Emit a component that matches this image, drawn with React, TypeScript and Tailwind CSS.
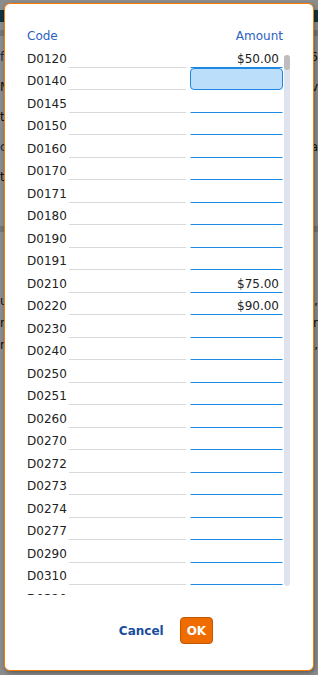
import React from 'react'

type Row = { code: string; amount: string }

const rows: Row[] = [
  { code: 'D0120', amount: '$50.00' },
  { code: 'D0140', amount: '' },
  { code: 'D0145', amount: '' },
  { code: 'D0150', amount: '' },
  { code: 'D0160', amount: '' },
  { code: 'D0170', amount: '' },
  { code: 'D0171', amount: '' },
  { code: 'D0180', amount: '' },
  { code: 'D0190', amount: '' },
  { code: 'D0191', amount: '' },
  { code: 'D0210', amount: '$75.00' },
  { code: 'D0220', amount: '$90.00' },
  { code: 'D0230', amount: '' },
  { code: 'D0240', amount: '' },
  { code: 'D0250', amount: '' },
  { code: 'D0251', amount: '' },
  { code: 'D0260', amount: '' },
  { code: 'D0270', amount: '' },
  { code: 'D0272', amount: '' },
  { code: 'D0273', amount: '' },
  { code: 'D0274', amount: '' },
  { code: 'D0277', amount: '' },
  { code: 'D0290', amount: '' },
  { code: 'D0310', amount: '' },
  { code: 'D0320', amount: '' },
]

const focusedCode = 'D0140'

function BackgroundPage() {
  // the page behind the dialog, dimmed by the overlay
  return (
    <div className="flex h-full flex-col bg-white text-[12px] text-[#222]">
      <div className="mt-[10px] h-[12px] bg-[#1f5f73]" />
      <div className="mt-[8px] h-[6px] bg-[#cfd8dc]" />
      <div className="flex flex-col gap-[12px] pt-[12px]">
        <div className="flex justify-between"><span className="text-[#1a4f8a]">fi</span><span>6</span></div>
        <div className="flex justify-between"><span>M</span><span>ev</span></div>
        <div className="flex justify-between"><span>t</span><span /></div>
        <div className="flex justify-between"><span className="text-[#1a4f8a]">c</span><span>a</span></div>
        <div className="flex justify-between"><span>t</span><span /></div>
      </div>
      <div className="mt-[40px] h-[6px] bg-[#cfd8dc]" />
      <div className="flex flex-col gap-[4px] pt-[60px]">
        <div className="flex justify-between"><span>u</span><span>s,</span></div>
        <div className="flex justify-between"><span>n</span><span>r</span></div>
        <div className="flex justify-between"><span>n</span><span>s,</span></div>
      </div>
    </div>
  )
}

function AmountRow({ row }: { row: Row }) {
  const focused = row.code === focusedCode
  return (
    <div className="flex h-[22.5px] shrink-0 items-end">
      <span className="w-[42px] shrink-0 leading-[18px] text-[#222]">{row.code}</span>
      <div className="flex-1 self-end border-b border-[#d9d9d9]" />
      <input
        readOnly
        value={row.amount}
        className={
          focused
            ? 'ml-[4px] h-[22px] w-[93px] shrink-0 rounded-[4px] border border-[#1e88e5] bg-[#bbdefb] pr-[3px] pt-[4px] text-right text-[#222] outline-none'
            : 'ml-[4px] h-[22px] w-[93px] shrink-0 rounded-none border border-transparent border-b-[#1e88e5] bg-transparent pr-[3px] pt-[4px] text-right text-[#222] outline-none'
        }
      />
    </div>
  )
}

export default function App() {
  return (
    <div
      className="relative h-[675px] w-[318px] overflow-hidden"
      style={{ fontFamily: '"DejaVu Sans", Verdana, sans-serif' }}
    >
      <div className="absolute inset-0">
        <BackgroundPage />
      </div>
      <div className="absolute inset-0 bg-black/45" />

      <div className="absolute left-[4px] top-[3px] flex h-[668px] w-[310px] flex-col rounded-[6px] border border-[#f57c00] bg-white pl-[22px] pr-[23px] pt-[23px] text-[12px] shadow-[1px_2px_4px_rgba(0,0,0,0.35)]">
        <div className="flex h-[18px] w-[256px] shrink-0 justify-between leading-[18px] text-[#2a62c2]">
          <span>Code</span>
          <span>Amount</span>
        </div>

        <div className="flex h-[550px] shrink-0 gap-[1px]">
          <div className="flex w-[256px] flex-col overflow-hidden">
            {rows.map((row) => (
              <AmountRow key={row.code} row={row} />
            ))}
          </div>
          <div className="flex w-[6px] flex-col pb-[9px] pt-[10px]">
            <div className="flex flex-1 flex-col rounded-[3px] bg-[#dfe3ee]">
              <div className="h-[15px] rounded-[3px] bg-[#bdbdbd]" />
            </div>
          </div>
        </div>

        <div className="mt-[22px] flex items-center justify-center gap-[16px] pl-[15px]">
          <button className="font-bold leading-[18px] text-[#1a4c9e]">Cancel</button>
          <button className="h-[27px] rounded-[4px] border border-[#c05600] bg-[#ef6c00] px-[6px] font-bold text-white">
            OK
          </button>
        </div>
      </div>
    </div>
  )
}
